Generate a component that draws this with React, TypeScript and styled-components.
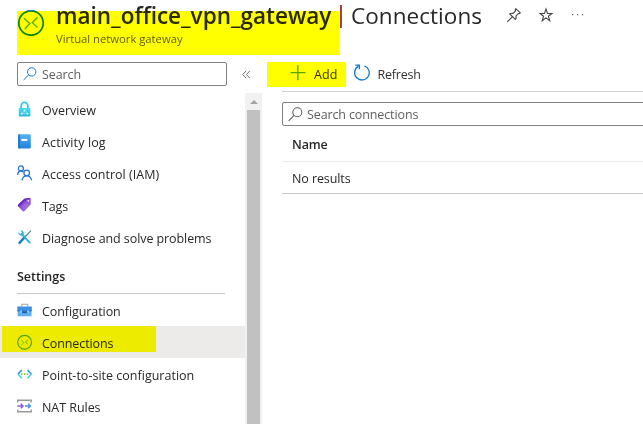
import React from 'react';
import styled, { createGlobalStyle } from 'styled-components';

const GlobalStyle = createGlobalStyle`
  *, *::before, *::after { box-sizing: border-box; }
  body { margin: 0; background: #fff; overflow: hidden; }
  svg { display: block; flex: none; }
`;

const Page = styled.div`
  width: 643px;
  height: 424px;
  overflow: hidden;
  display: flex;
  flex-direction: column;
  background: #fff;
  color: #292827;
  font: 400 12.5px/20px 'Open Sans', 'Noto Sans', sans-serif;
`;

const Text = styled.span<{ $track?: number; $drop?: number }>`
  white-space: nowrap;
  padding-top: ${p => p.$drop ?? 0}px;
  letter-spacing: ${p => p.$track ?? 0}px;
`;

const Marker = styled.div<{ $x: number; $y: number; $w: number; $h: number }>`
  position: absolute;
  left: ${p => p.$x}px;
  top: ${p => p.$y}px;
  width: ${p => p.$w}px;
  height: ${p => p.$h}px;
  background: #ff0;
  mix-blend-mode: multiply;
  pointer-events: none;
`;

const Header = styled.header`
  position: relative;
  height: 62px;
  flex: none;
  display: flex;
  padding-left: 17px;
`;

const HeaderIcon = styled.div`
  width: 39px;
  padding-top: 9px;
`;

const TitleRow = styled.h1`
  margin: 0;
  height: 30px;
  display: flex;
  align-items: center;
  color: #292827;
  font-size: 22.5px;
  line-height: 30px;
  font-weight: 400;
`;

const ResourceName = styled(Text)`
  width: 284px;
  font-weight: 600;
`;

const Divider = styled.span`
  width: 2px;
  height: 23px;
  margin: 3px 9px 0 0;
  background: linear-gradient(90deg, #a5383a 50%, #51658f 50%);
`;

const Subtitle = styled.div`
  margin-top: -1px;
  color: #605e5c;
  font-size: 11.3px;
  line-height: 20px;
`;

const HeaderActions = styled.div`
  display: flex;
  align-items: center;
  gap: 16px;
  height: 30px;
  margin-left: 24px;
`;

const Body = styled.div`
  display: flex;
  flex: 1;
  min-height: 0;
`;

const Sidebar = styled.nav`
  width: 262px;
  flex: none;
  display: flex;
  flex-direction: column;
`;

const SidebarTop = styled.div`
  display: flex;
  align-items: center;
  gap: 15px;
  height: 24px;
  margin-bottom: 7px;
  padding-left: 17px;
`;

const SearchBox = styled.div<{ $wide?: boolean }>`
  display: flex;
  align-items: center;
  flex: none;
  width: ${p => (p.$wide ? '380px' : '210px')};
  height: 24px;
  padding-left: 5px;
  gap: ${p => (p.$wide ? '4px' : '5px')};
  border: 1px solid #858382;
  border-radius: 2px;
  color: #605e5c;
`;

const MenuArea = styled.div`
  display: flex;
  flex: 1;
  min-height: 0;
`;

const Menu = styled.div`
  width: 245px;
`;

const MenuItem = styled.div<{ $selected?: boolean }>`
  position: relative;
  display: flex;
  align-items: center;
  gap: 9px;
  height: 32px;
  padding-left: 17px;
  background: ${p => (p.$selected ? '#edebe9' : '#fff')};
`;

const ItemGlyph = styled.span`
  width: 16px;
  height: 16px;
`;

const SectionTitle = styled.div`
  height: 41px;
  margin: 0 20px 0 17px;
  padding-top: 14px;
  border-bottom: 1px solid #c8c6c4;
  color: #252423;
  font-weight: 600;
`;

const Scrollbar = styled.div`
  width: 17px;
  display: flex;
  flex-direction: column;
  align-items: center;
  background: #f1f1f1;
`;

const ArrowCell = styled.div`
  height: 17px;
  padding-top: 7px;
`;

const Thumb = styled.div`
  flex: 1;
  width: 13px;
  background: #c1c1c1;
`;

const Main = styled.main`
  flex: 1;
  min-width: 0;
  padding-left: 20px;
`;

const Toolbar = styled.div`
  position: relative;
  display: flex;
  align-items: center;
  height: 30px;
  padding: 0 0 7px 8px;
  border-bottom: 1px solid #d2d0ce;
`;

const Command = styled.div<{ $gap: number }>`
  display: flex;
  align-items: center;
  gap: ${p => p.$gap}px;
  margin-right: 16px;
  color: #323130;
`;

const SearchWrap = styled.div`
  padding-top: 10px;
  overflow: hidden;
`;

const TableRow = styled.div<{ $head?: boolean }>`
  display: flex;
  align-items: center;
  height: ${p => (p.$head ? 36 : 32)}px;
  padding-left: 10px;
  padding-top: 2px;
  border-bottom: 1px solid ${p => (p.$head ? '#edebe9' : '#c8c6c4')};
  font-weight: ${p => (p.$head ? 600 : 400)};
`;

const GatewayIcon = () => (
  <svg width="28" height="28" viewBox="0 0 28 28" fill="none">
    <circle cx="14" cy="14" r="12.2" stroke="#0d8019" strokeWidth="1.7" />
    <path d="M8.6 3.1a12.2 12.2 0 0 1 10.8 0" stroke="#1b86d8" strokeWidth="1.7" />
    <path d="M7 9.2l5.8 5.3L7.8 20" stroke="#5fae26" strokeWidth="1.5" />
    <path d="M20.6 8.4l-5.3 5.2 5.3 4.9" stroke="#6db52a" strokeWidth="1.5" />
  </svg>
);

const ConnectionIcon = () => (
  <svg width="16" height="16" viewBox="0 0 16 16" fill="none">
    <circle cx="7.6" cy="8.3" r="6.9" stroke="#4c9f1d" strokeWidth="1.2" />
    <path d="M4.2 5.9l2.7 2.6-2.5 2.7M11.2 5.6L8.5 8.1l2.7 2.5" stroke="#7cb832" strokeWidth="1" />
  </svg>
);

const SearchIcon = ({ color, size = 14 }: { color: string; size?: number }) => (
  <svg width={size} height={size} viewBox="0 0 14 14" fill="none" stroke={color} strokeWidth="1">
    <circle cx="8.7" cy="4.9" r="4.2" />
    <path d="M5.7 7.9L.6 12.9" />
  </svg>
);

const LockIcon = () => (
  <svg width="16" height="16" viewBox="0 0 16 16">
    <defs>
      <linearGradient id="lock" x2="0" y2="1">
        <stop stopColor="#44dcf3" />
        <stop offset="1" stopColor="#2fb8e0" />
      </linearGradient>
    </defs>
    <path d="M4.2 8V4.7a3.3 3.3 0 0 1 6.6 0V8" fill="none" stroke="#3cc8e2" strokeWidth="1.9" />
    <rect x="1.8" y="7" width="11.6" height="8.5" rx=".7" fill="url(#lock)" />
    <path d="M7.6 9.4l-2.9 3.2h5.9z" fill="none" stroke="#9df0fb" strokeWidth=".6" />
    <g fill="#e9fdff">
      <circle cx="7.6" cy="9.5" r=".9" />
      <circle cx="4.7" cy="12.6" r=".9" />
      <circle cx="10.7" cy="12.6" r=".9" />
    </g>
  </svg>
);

const LogIcon = () => (
  <svg width="16" height="16" viewBox="0 0 16 16">
    <defs>
      <linearGradient id="log" x2="0" y2="1">
        <stop stopColor="#58b1ef" />
        <stop offset="1" stopColor="#2181dc" />
      </linearGradient>
    </defs>
    <rect x="1.2" y="1.2" width="12.6" height="14.2" rx="1" fill="url(#log)" />
    <path d="M1.2 2.2a1 1 0 0 1 1-1h.7v14.2h-.7a1 1 0 0 1-1-1z" fill="#2172c5" />
    <rect x="4.4" y="5.9" width="6" height="2" fill="#fff" />
  </svg>
);

const PeopleIcon = () => (
  <svg width="16" height="16" viewBox="0 0 16 16" fill="none" stroke="#2a74da" strokeWidth="1.3">
    <circle cx="3.9" cy="3.4" r="2.5" />
    <path d="M.6 10c.2-2.6 1.5-4 3.3-4 1.1 0 1.9.4 2.5 1" />
    <circle cx="9.7" cy="8" r="2.8" />
    <path d="M5 15.4c.4-3 2.1-4.6 4.7-4.6s4.4 1.6 4.9 4.6" />
  </svg>
);

const TagIcon = () => (
  <svg width="16" height="16" viewBox="0 0 16 16">
    <defs>
      <linearGradient id="tag" x1="0" y1="0" x2="1" y2="1">
        <stop stopColor="#7433c4" />
        <stop offset="1" stopColor="#aa7ae0" />
      </linearGradient>
    </defs>
    <path d="M1.3 7.6L7.4 1.7l4.9-.8a1.2 1.2 0 0 1 1.4 1.1l.1 5.3-6.3 6.8a1.3 1.3 0 0 1-1.9 0L1.3 9.4a1.3 1.3 0 0 1 0-1.8z" fill="url(#tag)" />
    <path d="M7.4 1.7L1.3 7.6a1.3 1.3 0 0 0 0 1.8l.5.5L9.3 2.8l4.2-1a1.2 1.2 0 0 0-1.2-.9z" fill="#6a2ac0" />
    <circle cx="11.3" cy="3.8" r=".9" fill="#f2e9fb" />
    <path d="M5.4 10.3l4-4M7 11.6l3.6-3.6" stroke="#bd96e5" strokeWidth=".6" />
  </svg>
);

const ToolsIcon = () => (
  <svg width="16" height="16" viewBox="0 0 16 16" fill="none">
    <path d="M14 1.6L7.8 8" stroke="#4f8199" strokeWidth="1.2" />
    <path d="M7.5 8.4l-5 5.4" stroke="#1686bb" strokeWidth="2.5" strokeLinecap="round" />
    <path d="M4.7 5l8 8.6" stroke="#2cafd2" strokeWidth="1.9" strokeLinecap="round" />
    <path d="M3.4 1.4l1.9.2 1.5 1.7-.1 2-1.5 1.4-2-.2-1.9-1.7.1-1.5 1.9 1.7 1.6-1.5z" fill="#32b9dd" />
  </svg>
);

const ToolboxIcon = () => (
  <svg width="16" height="16" viewBox="0 0 16 16">
    <path d="M4.8 4.6V2.3h5.9v2.3" fill="none" stroke="#a3a9ad" strokeWidth="1.1" />
    <path d="M.3 4.5h14.5v4.6H.3z" fill="#3a91e3" />
    <path d="M.6 9h13.9v5.3H.6z" fill="#5eaef0" />
    <path d="M.3 8.2h14.5v1.1H.3z" fill="#2a7dd0" />
    <path d="M5 9.3h5.2v1.8H5z" fill="#1b5eab" />
    <path d="M3.4 8.2h1.4v2.6H3.4zM10.4 8.2h1.4v2.6h-1.4z" fill="#9ad4f8" />
  </svg>
);

const PointToSiteIcon = () => (
  <svg width="16" height="16" viewBox="0 0 16 16" fill="none">
    <path d="M4.8 4L.9 8" stroke="#2696dc" strokeWidth="1.6" />
    <path d="M10.5 4l3.9 4" stroke="#2696dc" strokeWidth="1.6" />
    <path d="M4.8 12.2L.9 8M10.5 12.2L14.4 8" stroke="#49cbea" strokeWidth="1.6" />
    <g fill="#76b532">
      <circle cx="4.8" cy="8.1" r=".9" />
      <circle cx="7.7" cy="8.1" r=".9" />
      <circle cx="10.5" cy="8.1" r=".9" />
    </g>
  </svg>
);

const NatIcon = () => (
  <svg width="16" height="16" viewBox="0 0 16 16" fill="none">
    <path d="M.8 4.4V2.3h13.4v2.1M.8 11.6v2.1h13.4v-2.1" stroke="#999" strokeWidth="1.4" />
    <path d="M.3 8h5.6M3.8 5.8L6 8l-2.2 2.2" stroke="#8e5be0" strokeWidth="1.5" />
    <path d="M8 8h5.8M11.2 5.8L13.4 8l-2.2 2.2" stroke="#4597e3" strokeWidth="1.5" />
  </svg>
);

const PinIcon = () => (
  <svg width="16" height="16" viewBox="0 0 16 16" fill="none" stroke="#484644" strokeWidth="1.1">
    <path d="M9.8 1.7l4.5 4.2-1.2.8-.8-.2-2.4 2.6c.5 1.3.3 2.4-.5 3.3L3.7 7c1-.9 2.1-1 3.4-.6l2.5-2.6-.4-1zM6.4 9.8L1.2 14.8" />
  </svg>
);

const StarIcon = () => (
  <svg width="16" height="16" viewBox="0 0 16 16" fill="none" stroke="#484644" strokeWidth="1.1">
    <path d="M8 1.9l1.5 4.6h4.4l-3.5 2.7 1.4 4.5L8 10.9l-3.8 2.8 1.4-4.5-3.5-2.7h4.4z" />
  </svg>
);

const MoreIcon = () => (
  <svg width="16" height="16" viewBox="0 0 16 16" fill="#605e5c">
    <path d="M2 7h1.2v1.2H2zM7 7h1.2v1.2H7zM12 7h1.2v1.2H12z" />
  </svg>
);

const CollapseIcon = () => (
  <svg width="10" height="9" viewBox="0 0 10 9" fill="none" stroke="#72706e" strokeWidth="1">
    <path d="M4.2.8L.7 4.5l3.5 3.7M7.9.8L4.4 4.5l3.5 3.7" />
  </svg>
);

const PlusIcon = () => (
  <svg width="16" height="16" viewBox="0 0 16 16" stroke="#57a300" strokeWidth="1.4">
    <path d="M.5 7.6h15M7.8 .3v15" />
  </svg>
);

const RefreshIcon = () => (
  <svg width="16" height="18" viewBox="0 0 16 18" fill="none" stroke="#0f78d0" strokeWidth="1.3">
    <path d="M10.4 1.8A7.3 7.3 0 1 1 4.6 2.2" />
    <path d="M1.4 1.2h4v4" />
  </svg>
);

type Entry = { label: string; icon: React.ReactNode; track?: number; selected?: boolean };

const general: Entry[] = [
  { label: 'Overview', icon: <LockIcon />, track: -0.03 },
  { label: 'Activity log', icon: <LogIcon />, track: 0.12 },
  { label: 'Access control (IAM)', icon: <PeopleIcon />, track: 0.02 },
  { label: 'Tags', icon: <TagIcon />, track: -0.14 },
  { label: 'Diagnose and solve problems', icon: <ToolsIcon />, track: -0.08 },
];

const settings: Entry[] = [
  { label: 'Configuration', icon: <ToolboxIcon />, track: -0.08 },
  { label: 'Connections', icon: <ConnectionIcon />, track: -0.1, selected: true },
  { label: 'Point-to-site configuration', icon: <PointToSiteIcon />, track: 0.01 },
  { label: 'NAT Rules', icon: <NatIcon />, track: -0.05 },
];

const Entries = ({ items }: { items: Entry[] }) => (
  <>
    {items.map(item => (
      <MenuItem key={item.label} $selected={item.selected}>
        <ItemGlyph>{item.icon}</ItemGlyph>
        <Text $track={item.track} $drop={4}>{item.label}</Text>
        {item.selected && <Marker $x={2} $y={0} $w={154} $h={26} />}
      </MenuItem>
    ))}
  </>
);

export default function App() {
  return (
    <Page>
      <GlobalStyle />
      <Header>
        <HeaderIcon>
          <GatewayIcon />
        </HeaderIcon>
        <div>
          <TitleRow>
            <ResourceName $drop={1}>main_office_vpn_gateway</ResourceName>
            <Divider />
            <Text $track={0.05} $drop={1}>Connections</Text>
            <HeaderActions>
              <PinIcon />
              <StarIcon />
              <MoreIcon />
            </HeaderActions>
          </TitleRow>
          <Subtitle>
            <Text $track={-0.02}>Virtual network gateway</Text>
          </Subtitle>
        </div>
        <Marker $x={17} $y={11} $w={322} $h={44} />
      </Header>
      <Body>
        <Sidebar>
          <SidebarTop>
            <SearchBox>
              <SearchIcon color="#0f78d0" />
              <Text $track={-0.1} $drop={2}>Search</Text>
            </SearchBox>
            <CollapseIcon />
          </SidebarTop>
          <MenuArea>
            <Menu>
              <Entries items={general} />
              <SectionTitle>
                <Text $track={-0.02}>Settings</Text>
              </SectionTitle>
              <Entries items={settings} />
            </Menu>
            <Scrollbar>
              <ArrowCell>
                <svg width="8" height="4" viewBox="0 0 8 4">
                  <path d="M4 0l4 4H0z" fill="#a3a3a3" />
                </svg>
              </ArrowCell>
              <Thumb />
            </Scrollbar>
          </MenuArea>
        </Sidebar>
        <Main>
          <Toolbar>
            <Command $gap={8}>
              <PlusIcon />
              <Text $track={0.1} $drop={3}>Add</Text>
            </Command>
            <Command $gap={8}>
              <RefreshIcon />
              <Text $track={-0.2} $drop={3}>Refresh</Text>
            </Command>
            <Marker $x={-15} $y={0} $w={79} $h={25} />
          </Toolbar>
          <SearchWrap>
            <SearchBox $wide>
              <SearchIcon color="#605e5c" size={15} />
              <Text $track={-0.12} $drop={2}>Search connections</Text>
            </SearchBox>
          </SearchWrap>
          <TableRow $head>
            <Text $track={-0.15} $drop={1}>Name</Text>
          </TableRow>
          <TableRow>
            <Text $track={-0.1}>No results</Text>
          </TableRow>
        </Main>
      </Body>
    </Page>
  );
}
